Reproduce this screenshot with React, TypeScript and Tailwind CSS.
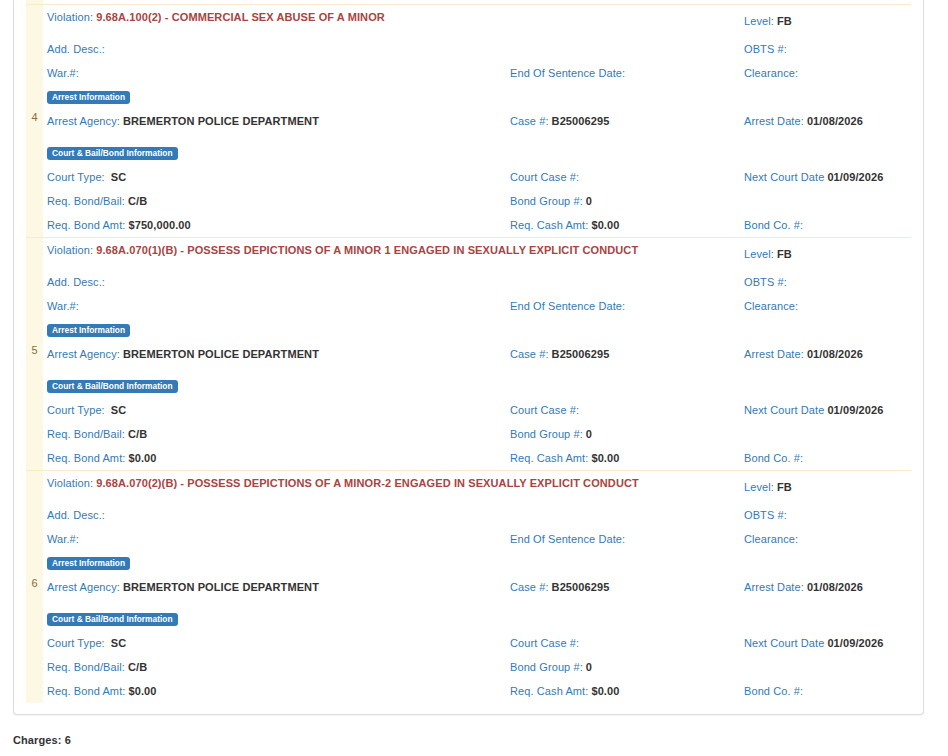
import React from 'react';

type Charge = {
  num: number;
  violation: string;
  level: string;
  agency: string;
  caseNo: string;
  arrestDate: string;
  courtType: string;
  nextCourtDate: string;
  bondBail: string;
  bondGroup: string;
  bondAmt: string;
  cashAmt: string;
};

const charges: Charge[] = [
  {
    num: 4,
    violation: '9.68A.100(2) - COMMERCIAL SEX ABUSE OF A MINOR',
    level: 'FB',
    agency: 'BREMERTON POLICE DEPARTMENT',
    caseNo: 'B25006295',
    arrestDate: '01/08/2026',
    courtType: 'SC',
    nextCourtDate: '01/09/2026',
    bondBail: 'C/B',
    bondGroup: '0',
    bondAmt: '$750,000.00',
    cashAmt: '$0.00',
  },
  {
    num: 5,
    violation: '9.68A.070(1)(B) - POSSESS DEPICTIONS OF A MINOR 1 ENGAGED IN SEXUALLY EXPLICIT CONDUCT',
    level: 'FB',
    agency: 'BREMERTON POLICE DEPARTMENT',
    caseNo: 'B25006295',
    arrestDate: '01/08/2026',
    courtType: 'SC',
    nextCourtDate: '01/09/2026',
    bondBail: 'C/B',
    bondGroup: '0',
    bondAmt: '$0.00',
    cashAmt: '$0.00',
  },
  {
    num: 6,
    violation: '9.68A.070(2)(B) - POSSESS DEPICTIONS OF A MINOR-2 ENGAGED IN SEXUALLY EXPLICIT CONDUCT',
    level: 'FB',
    agency: 'BREMERTON POLICE DEPARTMENT',
    caseNo: 'B25006295',
    arrestDate: '01/08/2026',
    courtType: 'SC',
    nextCourtDate: '01/09/2026',
    bondBail: 'C/B',
    bondGroup: '0',
    bondAmt: '$0.00',
    cashAmt: '$0.00',
  },
];

const Field = ({ label, value, gap = false }: { label: string; value?: string; gap?: boolean }) => (
  <div className="whitespace-nowrap">
    <span className="text-[#337ab7]">{label}</span>
    {value && <span className={`font-bold text-[#333] ${gap ? 'ml-[6px]' : 'ml-[3px]'}`}>{value}</span>}
  </div>
);

const Badge = ({ children }: { children: React.ReactNode }) => (
  <span className="block h-[13px] rounded-[3px] bg-[#337ab7] px-[5px] text-[8.4px] font-bold leading-[13px] tracking-normal text-white">
    {children}
  </span>
);

const cols = 'grid grid-cols-[463px_234px_1fr]';

function ChargeRow({ c }: { c: Charge }) {
  return (
    <div className="flex border-t border-[#f7ebc9]">
      <div className="flex w-[17px] shrink-0 items-center justify-center bg-[#fcf8e3] pb-[8px] text-[#8a6d3b]">
        {c.num}
      </div>
      <div className="min-w-0 flex-1 pl-[4px] pt-[4px]">
        <div className={`${cols} h-[32px]`}>
          <div className="col-span-2 whitespace-nowrap">
            <span className="text-[#337ab7]">Violation:</span>{' '}
            <span className="font-bold text-[#a94442]">{c.violation}</span>
          </div>
          <div className="pt-[4px]">
            <Field label="Level:" value={c.level} />
          </div>
        </div>
        <div className={`${cols} h-[24px]`}>
          <Field label="Add. Desc.:" />
          <div />
          <Field label="OBTS #:" />
        </div>
        <div className={`${cols} h-[24px]`}>
          <Field label="War.#:" />
          <Field label="End Of Sentence Date:" />
          <Field label="Clearance:" />
        </div>
        <div className="flex h-[24px] items-start pt-[2px]">
          <Badge>Arrest Information</Badge>
        </div>
        <div className={`${cols} h-[34px]`}>
          <Field label="Arrest Agency:" value={c.agency} />
          <Field label="Case #:" value={c.caseNo} />
          <Field label="Arrest Date:" value={c.arrestDate} />
        </div>
        <div className="flex h-[22px] items-start">
          <Badge>Court &amp; Bail/Bond Information</Badge>
        </div>
        <div className={`${cols} h-[24px]`}>
          <Field label="Court Type:" value={c.courtType} gap />
          <Field label="Court Case #:" />
          <Field label="Next Court Date" value={c.nextCourtDate} />
        </div>
        <div className={`${cols} h-[24px]`}>
          <Field label="Req. Bond/Bail:" value={c.bondBail} />
          <Field label="Bond Group #:" value={c.bondGroup} />
          <div />
        </div>
        <div className={`${cols} h-[20px]`}>
          <Field label="Req. Bond Amt:" value={c.bondAmt} />
          <Field label="Req. Cash Amt:" value={c.cashAmt} />
          <Field label="Bond Co. #:" />
        </div>
      </div>
    </div>
  );
}

export default function App() {
  return (
    <div
      className="min-h-[756px] bg-white text-[11px] leading-[16px] tracking-[0.1px] text-[#333]"
      style={{ fontFamily: '"Liberation Sans", Arial, sans-serif' }}
    >
      <div className="ml-[13px] w-[911px] rounded-b-[4px] border-x border-b border-[#ddd] bg-white px-[12px] pb-[11px] shadow-[0_1px_1px_rgba(0,0,0,0.05)]">
        <div className="h-[4px] w-[17px] bg-[#fcf8e3]" />
        {charges.map((c) => (
          <ChargeRow key={c.num} c={c} />
        ))}
      </div>
      <div className="ml-[13px] mt-[17px] font-bold text-[#333]">Charges: 6</div>
    </div>
  );
}
